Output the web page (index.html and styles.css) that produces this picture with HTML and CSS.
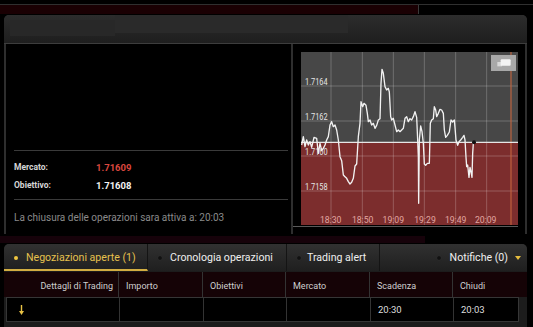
FILE: index.html
```html
<!DOCTYPE html>
<html lang="it">
<head>
    <meta charset="UTF-8">
    <meta name="viewport" content="width=device-width, initial-scale=1.0">
    <title>Trading</title>
    <link rel="stylesheet" href="styles.css">
</head>
<body>
    <div class="top-strip">
        <div class="top-line"></div>
        <div class="top-bar"></div>
    </div>

    <div class="trade-panel">
        <div class="panel-head">
            <div class="head-a"></div>
            <div class="head-b"></div>
        </div>
        <div class="panel-body">
            <div class="info">
                <div class="info-rows">
                    <div class="info-row">
                        <span class="info-label">Mercato:</span>
                        <span class="info-value down">1.71609</span>
                    </div>
                    <div class="info-row">
                        <span class="info-label">Obiettivo:</span>
                        <span class="info-value">1.71608</span>
                    </div>
                </div>
                <p class="note">La chiusura delle operazioni sara attiva a: 20:03</p>
            </div>

            <div class="chart-box">
                <svg class="chart" width="217" height="173" viewBox="33 36 651 519">
                    <rect x="33" y="36" width="651" height="271" fill="#474747"/>
                    <rect x="33" y="307" width="651" height="248" fill="#7c2d2d"/>
                    <g stroke="rgba(255,255,255,0.22)" stroke-width="3">
                        <line x1="123" y1="36" x2="123" y2="555"/>
                        <line x1="217" y1="36" x2="217" y2="555"/>
                        <line x1="310" y1="36" x2="310" y2="555"/>
                        <line x1="403" y1="36" x2="403" y2="555"/>
                        <line x1="497" y1="36" x2="497" y2="555"/>
                        <line x1="590" y1="36" x2="590" y2="555"/>
                        <line x1="33" y1="138" x2="684" y2="138"/>
                        <line x1="33" y1="243" x2="684" y2="243"/>
                        <line x1="33" y1="348" x2="684" y2="348"/>
                        <line x1="33" y1="453" x2="684" y2="453"/>
                    </g>
                    <line x1="663" y1="36" x2="663" y2="555" stroke="#c8663f" stroke-width="4" opacity="0.8"/>
                    <line x1="33" y1="307" x2="684" y2="307" stroke="#e6e6e6" stroke-width="4"/>

                    <g class="axis-y" font-size="28" fill="#e4e4e4">
                        <text x="45" y="135" textLength="68" lengthAdjust="spacingAndGlyphs">1.7164</text>
                        <text x="45" y="240" textLength="68" lengthAdjust="spacingAndGlyphs">1.7162</text>
                        <text x="45" y="345" textLength="68" lengthAdjust="spacingAndGlyphs">1.7160</text>
                        <text x="45" y="450" textLength="68" lengthAdjust="spacingAndGlyphs">1.7158</text>
                    </g>
                    <g class="axis-x" font-size="26" fill="#e2a7a2" text-anchor="middle">
                        <text x="122" y="548">18:30</text>
                        <text x="218" y="548">18:50</text>
                        <text x="310" y="548">19:09</text>
                        <text x="405" y="548">19:29</text>
                        <text x="497" y="548">19:49</text>
                        <text x="587" y="548">20:09</text>
                    </g>

                    <polyline fill="none" stroke="#f2f2f2" stroke-width="4" stroke-linejoin="round"
                        points="35,315 40,290 45,320 50,300 55,315 60,305 65,322 72,292 80,295 85,340 90,310 95,332 100,325 105,315 110,300 115,290 120,255 125,245 130,260 135,255 140,270 145,300 150,350 155,362 160,405 165,410 170,415 175,425 180,432 185,427 190,415 195,378 200,372 205,290 210,250 213,185 218,200 222,190 228,196 232,220 235,245 240,240 245,255 250,250 255,265 260,256 265,240 270,236 273,130 276,88 280,100 285,140 290,150 295,145 298,156 302,230 305,240 310,235 315,255 320,275 325,270 330,275 335,270 340,265 345,235 350,230 355,245 360,236 365,240 370,230 375,215 380,232 383,300 385,350 386,490 388,300 392,258 396,275 400,310 403,372 407,376 412,370 418,370 421,250 425,240 430,236 433,200 437,210 440,230 445,220 450,208 455,210 460,220 463,270 467,292 472,286 478,276 483,240 488,246 493,240 495,262 498,300 503,316 507,305 512,300 518,292 522,286 525,300 528,352 530,380 533,375 537,412 540,382 543,396 546,412 548,340 550,310 552,307"/>
                    <circle cx="552" cy="307" r="6" fill="#111"/>

                    <rect x="603" y="45" width="75" height="48" fill="#a8a8a8"/>
                    <rect x="622" y="66" width="14" height="13" fill="#d8d8d8"/>
                    <rect x="632" y="58" width="30" height="19" rx="3" fill="#f4f4f4"/>
                </svg>
                <div class="chart-base"></div>
            </div>
        </div>
    </div>

    <div class="gap-strip"></div>

    <div class="orders">
        <div class="tabs">
            <div class="tab active"><span class="dot"></span>Negoziazioni aperte (1)</div>
            <div class="tab tab-history"><span class="dot"></span>Cronologia operazioni</div>
            <div class="tab tab-alert"><span class="dot"></span>Trading alert</div>
            <div class="tab notif"><span class="dot"></span>Notifiche (0)<span class="caret"></span></div>
        </div>

        <div class="thead">
            <div class="grid">
                <div class="cell first">Dettagli di Trading</div>
                <div class="cell">Importo</div>
                <div class="cell">Obiettivi</div>
                <div class="cell">Mercato</div>
                <div class="cell">Scadenza</div>
                <div class="cell">Chiudi</div>
            </div>
        </div>

        <div class="grid trow">
            <div class="cell">
                <svg class="arrow" width="5" height="10" viewBox="0 0 5 10">
                    <line x1="2.5" y1="0" x2="2.5" y2="7" stroke="#e8c245" stroke-width="1.4"/>
                    <polygon points="0,6 5,6 2.5,10" fill="#e8c245"/>
                </svg>
            </div>
            <div class="cell"></div>
            <div class="cell"></div>
            <div class="cell"></div>
            <div class="cell">20:30</div>
            <div class="cell">20:03</div>
        </div>
    </div>
</body>
</html>
```

FILE: styles.css
```css
body {
    margin: 0;
    width: 533px;
    height: 327px;
    overflow: hidden;
    background: #000;
    font-family: Roboto, "Noto Sans", sans-serif;
    color: #e6e6e6;
}

/* strip above the panel */
.top-strip {
    height: 15px;
    padding-top: 4px;
    box-sizing: border-box;
}
.top-line {
    height: 1px;
    background: #2f2f2f;
}
.top-bar {
    width: 418px;
    height: 9px;
    background: #1a0003;
    border-right: 1px solid #3a3a3a;
}

/* main panel */
.trade-panel {
    margin: 0 6px 0 4px;
    background: #2e2e2e;
    border-radius: 5px 5px 0 0;
}
.panel-head {
    height: 28px;
    display: flex;
    background: linear-gradient(#2c2c2c, #1e1e1e);
    border-bottom: 1px solid #3d3d3d;
    border-radius: 5px 5px 0 0;
}
.head-a {
    width: 105px;
    height: 16px;
    margin: 5px 0 0 6px;
    background: #282828;
}
.head-b {
    width: 233px;
    height: 18px;
    background: #2a2a2a;
}
.panel-body {
    height: 190px;
    display: flex;
    gap: 2px;
    padding: 0 2px;
}

.info {
    width: 285px;
    background: #000;
    padding: 106px 3px 0 8px;
    box-sizing: border-box;
}
.info-rows {
    border-top: 1px solid #3a3a3a;
    border-bottom: 1px solid #3a3a3a;
    padding: 7px 0 5px;
}
.info-row {
    height: 18px;
    display: flex;
    align-items: center;
    font-size: 8.5px;
    font-weight: bold;
}
.info-label {
    width: 82px;
    color: #d6d6d6;
}
.info-value {
    font-size: 9.5px;
    color: #f2f2f2;
}
.info-value.down {
    color: #d9473f;
}
.note {
    margin: 11px 0 0;
    line-height: 14px;
    font-size: 10px;
    color: #8a8a8a;
}

.chart-box {
    flex: 1;
    background: #000;
    padding: 8px 0 0 8px;
}
.chart {
    display: block;
}
.chart-base {
    width: 225px;
    height: 1px;
    margin: 1px 0 0 -8px;
    background: #5a5a5a;
}

.gap-strip {
    width: 425px;
    height: 7px;
    margin: 2px 0 1px;
    background: #16020a;
}

/* orders panel */
.orders {
    height: 83px;
    margin: 0 6px 0 4px;
    background: #1c1c1c;
    border-radius: 5px 5px 0 0;
}
.tabs {
    height: 27px;
    display: flex;
    background: linear-gradient(#313131, #1f1f1f);
    border-radius: 5px 5px 0 0;
}
.tab {
    display: flex;
    align-items: center;
    gap: 8px;
    padding-left: 10px;
    box-sizing: border-box;
    border-right: 1px solid #141414;
    font-size: 10.6px;
    color: #efefef;
}
.tab.active {
    width: 144px;
    color: #e6c14e;
    border-bottom: 2px solid #d2ae42;
    padding-top: 2px;
}
.tab-history {
    width: 139px;
}
.tab-alert {
    width: 93px;
    gap: 6px;
}
.tab.notif {
    margin-left: auto;
    border-right: none;
    gap: 9px;
    padding-right: 6px;
}
.dot {
    width: 4px;
    height: 4px;
    border-radius: 50%;
    background: #111;
    box-shadow: 0 0 1px #444;
}
.active .dot {
    background: #f0c640;
    box-shadow: none;
}
.caret {
    width: 0;
    height: 0;
    margin-left: -2px;
    border-left: 3px solid transparent;
    border-right: 3px solid transparent;
    border-top: 4px solid #e6bd3e;
}

.thead {
    margin-top: 1px;
    background: #150306;
}
.grid {
    display: grid;
    grid-template-columns: 112px 84px 83px 84px 83px 67px;
    margin-left: 2px;
}
.thead .grid {
    height: 25px;
}
.thead .cell {
    font-size: 9px;
    color: #cfcfcf;
    padding-top: 2px;
}
.cell {
    display: flex;
    align-items: center;
    padding-left: 7px;
    border-left: 1px solid #333;
}
.cell:first-child {
    border-left: none;
}
.cell.first {
    justify-content: flex-end;
    padding: 2px 5px 0 0;
}
.trow {
    width: 513px;
    height: 25px;
    box-sizing: border-box;
    background: #000;
    border: 1px solid #363636;
    font-size: 9.5px;
    color: #dedede;
}
.trow .cell:first-child {
    padding-left: 12px;
}
.arrow {
    display: block;
}
```
